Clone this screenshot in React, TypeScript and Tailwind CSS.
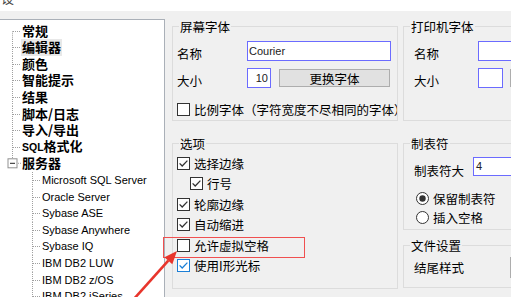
import React from 'react';

const CJK = '"Noto Sans CJK SC", "Noto Sans", sans-serif';
const LAT = '"Liberation Sans", Arial, sans-serif';

function CheckBox({ checked, blue }: { checked?: boolean; blue?: boolean }) {
  const c = blue ? '#1c7fd6' : '#333333';
  return (
    <svg width="13" height="13" viewBox="0 0 13 13" className="shrink-0">
      <rect x="0.5" y="0.5" width="12" height="12" fill="#fff" stroke={c} />
      {checked && <path d="M2.6 6.4 L5.2 9 L10.4 3.6" fill="none" stroke={c} strokeWidth="1.3" />}
    </svg>
  );
}

function Radio({ on }: { on?: boolean }) {
  return (
    <svg width="13" height="13" viewBox="0 0 13 13" className="shrink-0">
      <circle cx="6.5" cy="6.5" r="6" fill="#fff" stroke="#333" />
      {on && <circle cx="6.5" cy="6.5" r="3.2" fill="#333" />}
    </svg>
  );
}

function Group({ title, className, children }: { title: string; className: string; children?: React.ReactNode }) {
  return (
    <div className={`border border-[#dcdcdc] ${className}`}>
      <div className="-mt-[9px] ml-[6px] w-fit bg-[#f0f0f0] px-[1px] text-[12.5px] leading-[17px]">{title}</div>
      {children}
    </div>
  );
}

function CheckRow({ label, checked, blue, indent }: { label: string; checked?: boolean; blue?: boolean; indent?: boolean }) {
  return (
    <div className={`flex h-[20.5px] items-center gap-[4px] ${indent ? 'pl-[17px]' : 'pl-[4px]'}`}>
      <CheckBox checked={checked} blue={blue} />
      <span className="text-[12.5px] leading-[17px] whitespace-nowrap">{label}</span>
    </div>
  );
}

// tree gutter drawings
function RootGutter({ pos }: { pos: 'first' | 'mid' | 'last' }) {
  const h = 16.6;
  const m = h / 2;
  return (
    <svg width="21" height={h} className="shrink-0">
      {pos === 'first' && <line x1="12.5" y1={m} x2="12.5" y2={h} stroke="#a0a0a0" strokeDasharray="1 1" />}
      {pos === 'mid' && <line x1="12.5" y1="0" x2="12.5" y2={h} stroke="#a0a0a0" strokeDasharray="1 1" />}
      {pos !== 'last' && <line x1="13" y1={m + 0.2} x2="21" y2={m + 0.2} stroke="#a0a0a0" strokeDasharray="1 1" />}
      {pos === 'last' && (
        <>
          <line x1="12.5" y1="0" x2="12.5" y2={m - 4.5} stroke="#a0a0a0" strokeDasharray="1 1" />
          <rect x="8" y={m - 4.5} width="9" height="9" fill="#fff" stroke="#919191" />
          <line x1="10" y1={m} x2="15" y2={m} stroke="#222" />
          <line x1="18" y1={m} x2="21" y2={m} stroke="#a0a0a0" strokeDasharray="1 1" />
        </>
      )}
    </svg>
  );
}

function ChildGutter() {
  const h = 16.6;
  const m = h / 2;
  return (
    <svg width="41" height={h} className="shrink-0">
      <line x1="32.5" y1="0" x2="32.5" y2={h} stroke="#a0a0a0" strokeDasharray="1 1" />
      <line x1="33" y1={m + 0.2} x2="41" y2={m + 0.2} stroke="#a0a0a0" strokeDasharray="1 1" />
    </svg>
  );
}

const rootItems = ['常规', '编辑器', '颜色', '智能提示', '结果', '脚本/日志', '导入/导出'];
const servers = [
  'Microsoft SQL Server',
  'Oracle Server',
  'Sybase ASE',
  'Sybase Anywhere',
  'Sybase IQ',
  'IBM DB2 LUW',
  'IBM DB2 z/OS',
  'IBM DB2 iSeries',
];

export default function App() {
  return (
    <div className="relative flex h-[297px] w-[511px] flex-col overflow-hidden bg-[#f0f0f0] text-black" style={{ fontFamily: CJK }}>
      {/* window title (cut off) */}
      <div className="h-[11px] shrink-0 overflow-hidden bg-white">
        <div className="-mt-[11px] pl-[1px] text-[13px] leading-[17px] text-[#444]">设</div>
      </div>

      <div className="flex flex-1">
        {/* tree */}
        <div className="mt-[8px] w-[165px] shrink-0 overflow-hidden border-t border-r border-[#aab0b8] bg-white pt-[2.7px]">
          {rootItems.map((t, i) => (
            <div key={t} className="flex h-[16.6px] items-center">
              <RootGutter pos={i === 0 ? 'first' : 'mid'} />
              <span className={`text-[13px] font-bold leading-[16.6px] whitespace-nowrap ${i === 1 ? 'bg-[#e8e8e8] px-[1px]' : 'ml-[1px]'}`}>{t}</span>
            </div>
          ))}
          <div className="flex h-[16.6px] items-center">
            <RootGutter pos="mid" />
            <span className="ml-[1px] text-[13px] font-bold leading-[16.6px] whitespace-nowrap">
              <span className="text-[10.5px]" style={{ fontFamily: LAT }}>SQL</span>格式化
            </span>
          </div>
          <div className="flex h-[16.6px] items-center">
            <RootGutter pos="last" />
            <span className="ml-[1px] text-[13px] font-bold leading-[16.6px]">服务器</span>
          </div>
          {servers.map((s) => (
            <div key={s} className="flex h-[16.6px] items-center">
              <ChildGutter />
              <span className="ml-[1px] text-[11px] leading-[16.6px] whitespace-nowrap" style={{ fontFamily: LAT }}>{s}</span>
            </div>
          ))}
        </div>

        {/* settings */}
        <div className="flex gap-[5px] pl-[7px] pt-[15px]">
          <div className="flex w-[226px] shrink-0 flex-col">
            <Group title="屏幕字体" className="h-[95px]">
              <div className="mt-[6px] flex items-start pl-[4px]">
                <div className="w-[70px] pt-[4px] text-[12.5px] leading-[17px]">名称</div>
                <div className="flex h-[20px] w-[144px] items-center border border-[#6b6bff] bg-white pl-[1px] text-[11px] text-[#222]" style={{ fontFamily: LAT }}>Courier</div>
              </div>
              <div className="mt-[6px] flex items-start pl-[4px]">
                <div className="w-[70px] pt-[4px] text-[12.5px] leading-[17px]">大小</div>
                <div className="flex h-[20px] w-[24px] items-center justify-end border border-[#6b6bff] bg-white pr-[2px] text-[11px] text-[#222]" style={{ fontFamily: LAT }}>10</div>
                <div className="ml-[8px] mt-[1px] flex h-[18px] w-[111px] items-center justify-center border border-[#adadad] bg-[#e1e1e1] text-[12.5px] leading-[17px]">更换字体</div>
              </div>
              <div className="mt-[12px] flex h-[17px] items-center gap-[4px] overflow-hidden pl-[4px] whitespace-nowrap">
                <CheckBox />
                <span className="text-[12.5px] leading-[17px]">比例字体（字符宽度不尽相同的字体）</span>
              </div>
            </Group>

            <Group title="选项" className="mt-[22px] h-[146px]">
              <div className="pt-[1px]">
                <CheckRow label="选择边缘" checked />
                <CheckRow label="行号" checked indent />
                <CheckRow label="轮廓边缘" checked />
                <CheckRow label="自动缩进" checked />
                <CheckRow label="允许虚拟空格" />
                <CheckRow label="使用I形光标" checked blue />
              </div>
            </Group>
          </div>

          <div className="flex w-[140px] shrink-0 flex-col">
            <Group title="打印机字体" className="h-[95px]">
              <div className="mt-[6px] flex items-start pl-[10px]">
                <div className="w-[64px] shrink-0 pt-[4px] text-[12.5px] leading-[17px]">名称</div>
                <div className="h-[20px] w-[100px] shrink-0 border border-[#6b6bff] bg-white" />
              </div>
              <div className="mt-[6px] flex items-start pl-[10px]">
                <div className="w-[64px] shrink-0 pt-[4px] text-[12.5px] leading-[17px]">大小</div>
                <div className="h-[20px] w-[25px] shrink-0 border border-[#6b6bff] bg-white" />
                <div className="ml-[7px] mt-[1px] h-[18px] w-[60px] shrink-0 border border-[#adadad] bg-[#e1e1e1]" />
              </div>
            </Group>

            <Group title="制表符" className="mt-[22px] h-[87px]">
              <div className="mt-[5px] flex items-start pl-[10px]">
                <div className="w-[59px] shrink-0 pt-[5px] text-[12.5px] leading-[17px] whitespace-nowrap">制表符大</div>
                <div className="flex h-[19px] w-[80px] shrink-0 items-center border border-[#6b6bff] bg-white pl-[2px] text-[11px] text-[#222]" style={{ fontFamily: LAT }}>4</div>
              </div>
              <div className="mt-[9.5px] flex h-[19px] items-center gap-[4px] pl-[12px]">
                <Radio on />
                <span className="text-[12.5px] leading-[17px] whitespace-nowrap">保留制表符</span>
              </div>
              <div className="flex h-[19px] items-center gap-[4px] pl-[12px]">
                <Radio />
                <span className="text-[12.5px] leading-[17px] whitespace-nowrap">插入空格</span>
              </div>
            </Group>

            <Group title="文件设置" className="mt-[15px] h-[43px]">
              <div className="mt-[3px] flex items-center pl-[10px]">
                <div className="w-[96px] shrink-0 text-[12.5px] leading-[17px] whitespace-nowrap">结尾样式</div>
                <div className="h-[21px] w-[60px] shrink-0 border border-[#adadad] bg-[#e1e1e1]" />
              </div>
            </Group>
          </div>
        </div>
      </div>

      {/* annotation: red box + arrow */}
      <div className="pointer-events-none absolute left-[163px] top-[237px] h-[21px] w-[142px] border border-[#f05050]" />
      <svg className="pointer-events-none absolute left-0 top-0" width="511" height="297">
        <line x1="133" y1="300" x2="168.3" y2="260.7" stroke="#e8352c" strokeWidth="2.6" />
        <polygon points="177,251 172.3,264.2 164.4,257.2" fill="#e8352c" />
      </svg>
    </div>
  );
}
